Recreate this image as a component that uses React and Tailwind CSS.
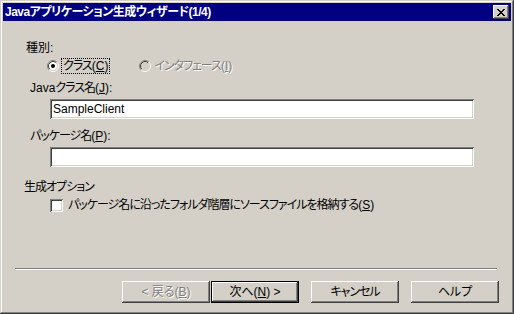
import React from "react";

const FONT = { fontFamily: '"Liberation Sans", "Noto Sans CJK JP", sans-serif', fontFeatureSettings: '"palt"' };

function Radio({ checked, disabled }) {
  return (
    <svg width="12" height="12" viewBox="0 0 12 12" className="shrink-0">
      <circle cx="6" cy="6" r="4.5" fill={disabled ? "#d4d0c8" : "#ffffff"} />
      <path d="M2.11 9.89 A5.5 5.5 0 0 1 9.89 2.11" fill="none" stroke="#808080" />
      <path d="M9.89 2.11 A5.5 5.5 0 0 1 2.11 9.89" fill="none" stroke="#ffffff" />
      <path d="M2.82 9.18 A4.5 4.5 0 0 1 9.18 2.82" fill="none" stroke="#404040" />
      <path d="M9.18 2.82 A4.5 4.5 0 0 1 2.82 9.18" fill="none" stroke="#d4d0c8" />
      {checked && <circle cx="6" cy="6" r="2" fill="#000000" />}
    </svg>
  );
}

function CloseGlyph() {
  const rows = ["11000011", "01100110", "00111100", "00011000", "00111100", "01100110", "11000011"];
  return (
    <svg width="8" height="7" viewBox="0 0 8 7" shapeRendering="crispEdges">
      {rows.map((r, y) =>
        r.split("").map((c, x) => (c === "1" ? <rect key={`${x}-${y}`} x={x} y={y} width="1" height="1" fill="#000" /> : null))
      )}
    </svg>
  );
}

// accelerator key: underlined, latin spacing kept normal
function Acc({ k }) {
  return (
    <span className="tracking-normal">
      (<u>{k}</u>)
    </span>
  );
}

function Button({ children, disabled, isDefault }) {
  const raised = "shadow-[inset_-1px_-1px_#404040,inset_1px_1px_#ffffff,inset_-2px_-2px_#808080]";
  const text = disabled ? "text-[#808080] [text-shadow:1px_1px_0_#ffffff]" : "text-black";
  if (isDefault) {
    return (
      <div className="w-[88px] h-[22px] border border-black flex">
        <div className={`flex-1 flex items-center justify-center text-[12px] leading-[14px] ${raised} ${text}`}>{children}</div>
      </div>
    );
  }
  return (
    <div className={`w-[88px] h-[22px] flex items-center justify-center text-[12px] leading-[14px] ${raised} ${text}`}>
      {children}
    </div>
  );
}

function TextBox({ value }) {
  return (
    <div className="ml-[47px] w-[424px] h-[20px] bg-white shadow-[inset_1px_1px_#808080,inset_-1px_-1px_#ffffff,inset_2px_2px_#404040,inset_-2px_-2px_#d4d0c8] flex items-center pl-[3px] text-[12px] leading-[14px] tracking-normal text-black">
      {value}
    </div>
  );
}

export default function App() {
  return (
    <div
      className="w-[514px] h-[314px] bg-[#d4d0c8] p-[3px] flex flex-col shadow-[inset_-1px_-1px_#404040,inset_1px_1px_#d4d0c8,inset_-2px_-2px_#808080,inset_2px_2px_#ffffff] select-none"
      style={FONT}
    >
      {/* title bar */}
      <div className="h-[18px] bg-[#000080] flex items-center justify-between pl-[2px] pr-[2px]">
        <span className="text-white font-bold text-[12px] leading-[14px] tracking-[-0.5px]">Javaアプリケーション生成ウィザード(1/4)</span>
        <div className="w-[16px] h-[14px] bg-[#d4d0c8] flex items-center justify-center shadow-[inset_-1px_-1px_#404040,inset_1px_1px_#ffffff,inset_-2px_-2px_#808080]">
          <CloseGlyph />
        </div>
      </div>

      {/* body */}
      <div className="flex flex-col text-[12px] leading-[14px] tracking-[-1px] text-black">
        <div className="mt-[20px] ml-[23px] h-[14px] tracking-normal">種別:</div>

        <div className="mt-[4px] ml-[44px] h-[14px] flex items-center">
          <Radio checked />
          <span className="ml-[3px] pl-[1px] pr-[1px] outline outline-1 outline-dotted outline-black">
            クラス<Acc k="C" />
          </span>
          <div className="ml-[30px] flex items-center">
            <Radio disabled />
            <span className="ml-[3px] text-[#808080] [text-shadow:1px_1px_0_#ffffff]">
              インタフェース<Acc k="I" />
            </span>
          </div>
        </div>

        <div className="mt-[8px] ml-[27px] h-[14px]">
          <span className="tracking-normal">Java</span>クラス名<Acc k="J" />:
        </div>
        <div className="mt-[4px]">
          <TextBox value="SampleClient" />
        </div>

        <div className="mt-[10px] ml-[27px] h-[14px]">
          パッケージ名<Acc k="P" />:
        </div>
        <div className="mt-[4px]">
          <TextBox value="" />
        </div>

        <div className="mt-[13px] ml-[21px] h-[14px]">生成オプション</div>
        <div className="mt-[4px] ml-[47px] h-[14px] flex items-center">
          <div className="w-[13px] h-[13px] bg-white shrink-0 shadow-[inset_1px_1px_#808080,inset_-1px_-1px_#ffffff,inset_2px_2px_#404040,inset_-2px_-2px_#d4d0c8]" />
          <span className="ml-[5px]">
            パッケージ名に沿ったフォルダ階層にソースファイルを格納する<Acc k="S" />
          </span>
        </div>

        <div className="mt-[56px] ml-[12px] w-[482px] h-[2px] border-t border-t-[#808080] border-b border-b-white" />

        <div className="mt-[11px] ml-[119px] flex tracking-normal">
          <Button disabled>&lt; 戻る(<u>B</u>)</Button>
          <div className="ml-[1px]">
            <Button isDefault>
              次へ(<u>N</u>) &gt;
            </Button>
          </div>
          <div className="ml-[12px]">
            <Button>
              <span className="tracking-[-1px]">キャンセル</span>
            </Button>
          </div>
          <div className="ml-[12px]">
            <Button>ヘルプ</Button>
          </div>
        </div>
      </div>
    </div>
  );
}
